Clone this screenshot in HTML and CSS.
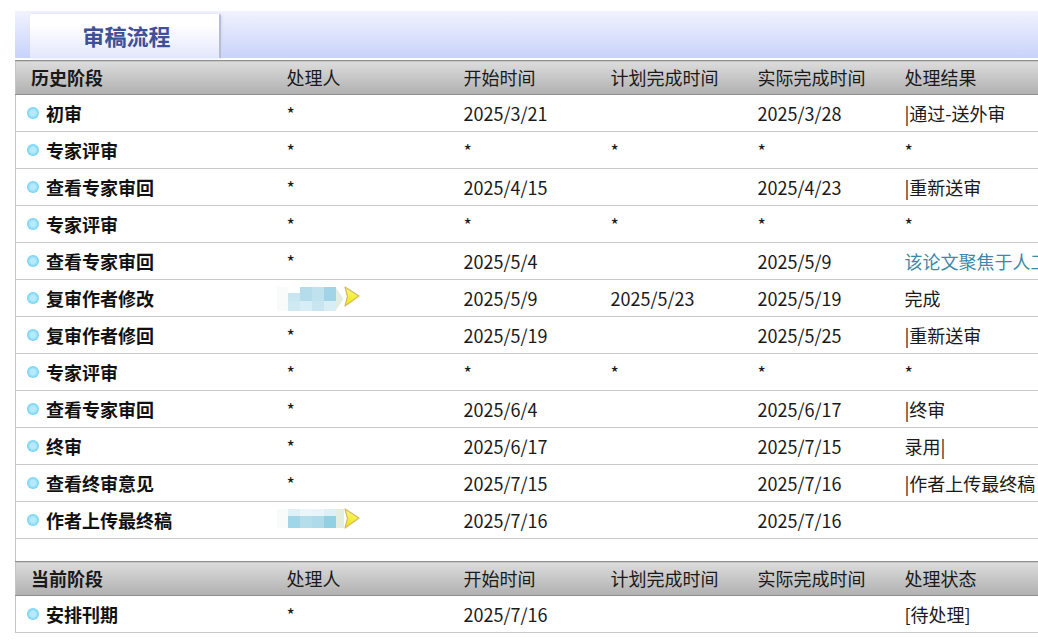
FILE: index.html
```html
<!DOCTYPE html>
<html lang="zh">
<head>
<meta charset="utf-8">
<title>审稿流程</title>
<link rel="stylesheet" href="styles.css">
</head>
<body>
<svg class="defs" width="0" height="0" aria-hidden="true">
  <defs>
    <linearGradient id="yel" x1="0" y1="0" x2="0" y2="1">
      <stop offset="0" stop-color="#f8f680"/><stop offset="1" stop-color="#ecea00"/>
    </linearGradient>
    <symbol id="arrow" viewBox="0 0 16 21">
      <path d="M1 1 L15 10 L1 20 L3.5 10.5 Z" fill="url(#yel)" stroke="#d8b860" stroke-width="1.2" stroke-linejoin="round"/>
    </symbol>
  </defs>
</svg>
<main class="page">
  <div class="tabbar"><div class="tab">审稿流程</div></div>
  <table class="flow">
    <colgroup>
      <col class="c1"><col class="c2"><col class="c3"><col class="c4"><col class="c5"><col class="c6">
    </colgroup>
    <thead>
      <tr class="head"><th class="stage-h">历史阶段</th><th>处理人</th><th>开始时间</th><th>计划完成时间</th><th>实际完成时间</th><th>处理结果</th></tr>
    </thead>
    <tbody>
      <tr><td class="stage"><span class="dot"></span>初审</td><td>*</td><td>2025/3/21</td><td></td><td>2025/3/28</td><td>|通过-送外审</td></tr>
      <tr><td class="stage"><span class="dot"></span>专家评审</td><td>*</td><td>*</td><td>*</td><td>*</td><td>*</td></tr>
      <tr><td class="stage"><span class="dot"></span>查看专家审回</td><td>*</td><td>2025/4/15</td><td></td><td>2025/4/23</td><td>|重新送审</td></tr>
      <tr><td class="stage"><span class="dot"></span>专家评审</td><td>*</td><td>*</td><td>*</td><td>*</td><td>*</td></tr>
      <tr><td class="stage"><span class="dot"></span>查看专家审回</td><td>*</td><td>2025/5/4</td><td></td><td>2025/5/9</td><td class="link">该论文聚焦于人工智能</td></tr>
      <tr><td class="stage"><span class="dot"></span>复审作者修改</td><td class="who"><div class="who-in">
        <span class="blur b1"><i></i><i></i><i></i><i></i><i></i><i></i><i></i><i></i></span><svg class="arrow"><use href="#arrow"/></svg>
      </div></td><td>2025/5/9</td><td>2025/5/23</td><td>2025/5/19</td><td>完成</td></tr>
      <tr><td class="stage"><span class="dot"></span>复审作者修回</td><td>*</td><td>2025/5/19</td><td></td><td>2025/5/25</td><td>|重新送审</td></tr>
      <tr><td class="stage"><span class="dot"></span>专家评审</td><td>*</td><td>*</td><td>*</td><td>*</td><td>*</td></tr>
      <tr><td class="stage"><span class="dot"></span>查看专家审回</td><td>*</td><td>2025/6/4</td><td></td><td>2025/6/17</td><td>|终审</td></tr>
      <tr><td class="stage"><span class="dot"></span>终审</td><td>*</td><td>2025/6/17</td><td></td><td>2025/7/15</td><td>录用|</td></tr>
      <tr><td class="stage"><span class="dot"></span>查看终审意见</td><td>*</td><td>2025/7/15</td><td></td><td>2025/7/16</td><td>|作者上传最终稿</td></tr>
      <tr><td class="stage"><span class="dot"></span>作者上传最终稿</td><td class="who"><div class="who-in">
        <span class="blur b2"><i></i><i></i><i></i><i></i><i></i><i></i><i></i><i></i></span><svg class="arrow"><use href="#arrow"/></svg>
      </div></td><td>2025/7/16</td><td></td><td>2025/7/16</td><td></td></tr>
      <tr class="spacer"><td colspan="6"></td></tr>
    </tbody>
    <thead>
      <tr class="head"><th class="stage-h">当前阶段</th><th>处理人</th><th>开始时间</th><th>计划完成时间</th><th>实际完成时间</th><th>处理状态</th></tr>
    </thead>
    <tbody>
      <tr><td class="stage"><span class="dot"></span>安排刊期</td><td>*</td><td>2025/7/16</td><td></td><td></td><td>[待处理]</td></tr>
    </tbody>
  </table>
</main>
</body>
</html>
```
FILE: styles.css
```css
html, body { margin: 0; padding: 0; height: 640px; overflow: hidden; background: #fff; }
body {
  font-family: "Noto Sans CJK SC", "Noto Sans", sans-serif;
  font-size: 18px;
  color: #1a1a1a;
}
.defs { display: block; height: 0; }
.page { width: 1200px; margin-left: 15px; padding-top: 11px; }
.tabbar {
  height: 47px;
  background: linear-gradient(#f1f3fe, #c8d2fb);
  padding-left: 15px;
  display: flex;
  align-items: flex-end;
}
.tab {
  box-sizing: border-box;
  width: 191px;
  height: 44px;
  background: linear-gradient(#ffffff 25%, #e3e7fc);
  border-right: 2px solid #b4bcd8;
  border-radius: 2px 2px 0 0;
  box-shadow: 1px 0 3px #d4d9ee;
  text-align: center;
  font-size: 22px;
  line-height: 42px;
  font-weight: 700;
  color: #3f5098;
  padding-bottom: 2px;
  padding-left: 4px;
}
.flow {
  table-layout: fixed;
  width: 1200px;
  border-collapse: collapse;
  border-left: 1px solid #c4c4c4;
  margin-top: 2px;
}
.c1 { width: 271px; }
.c2 { width: 177px; }
.c3 { width: 147px; }
.c4 { width: 147px; }
.c5 { width: 147px; }
.c6 { width: 311px; }
.head th {
  height: 34px;
  padding: 0 0 2px;
  box-sizing: border-box;
  text-align: left;
  font-weight: 400;
  white-space: nowrap;
  background: linear-gradient(#dcdcdc, #b0b0b0);
  border-top: 1px solid #8f8f8f;
  border-bottom: 1px solid #8f8f8f;
}
.head .stage-h { font-weight: 700; padding-left: 15px; }
td {
  height: 36px;
  padding: 0;
  white-space: nowrap;
  overflow: hidden;
  border-bottom: 1px solid #c8c8c8;
  line-height: 36px;
}
.stage { font-weight: 700; color: #111; padding-left: 11px; }
.dot {
  display: inline-block;
  width: 12px;
  height: 12px;
  margin-right: 7px;
  border-radius: 50%;
  background: radial-gradient(circle at 50% 50%, #b4ecfb 0 30%, #5cc6f0 85%, #a8e0f8 100%);
  vertical-align: 2px;
}
.link { color: #3d88a8; }
.spacer td { height: 22px; line-height: 22px; border-bottom: 0; }
.who { overflow: visible; }
.who-in { display: flex; align-items: flex-start; height: 36px; padding-left: 1px; }
.blur {
  position: relative;
  display: grid;
  grid-template-columns: repeat(4, 12px);
  margin-top: 7px;
  margin-right: 8px;
}
.blur::before {
  content: "";
  position: absolute;
  left: -11px;
  top: 0;
  bottom: 0;
  width: 11px;
  background: #f8fbfa;
}
.blur::after {
  content: "";
  position: absolute;
  left: 48px;
  top: 0;
  bottom: 0;
  width: 8px;
  background: #e4eee0;
}
.b1 { grid-template-rows: 14px 10px; }
.b1::after { clip-path: polygon(0 0, 100% 50%, 0 100%); }
.b2 { grid-template-rows: 7px 12px; }
.b1 i:nth-child(1) { background: linear-gradient(#fff 40%, #c8e6f0 40%); }
.b1 i:nth-child(2) { background: #b4dcea; }
.b1 i:nth-child(3) { background: #bfe2ee; }
.b1 i:nth-child(4) { background: #a0d4e6; }
.b1 i:nth-child(5) { background: #cfe9f3; }
.b1 i:nth-child(6) { background: #d8eef6; }
.b1 i:nth-child(7) { background: #c8e5f0; }
.b1 i:nth-child(8) { background: #d8edf4; }
.b2 i:nth-child(1) { background: #dff1f7; }
.b2 i:nth-child(2) { background: #ebf6fa; }
.b2 i:nth-child(3) { background: #e8f4f9; }
.b2 i:nth-child(4) { background: #dcf0f6; }
.b2 i:nth-child(5) { background: #a0d6e8; }
.b2 i:nth-child(6) { background: #b4deec; }
.b2 i:nth-child(7) { background: #aedaea; }
.b2 i:nth-child(8) { background: #92d0e4; }
.arrow { width: 16px; height: 21px; margin-top: 6px; flex: none; }
```
